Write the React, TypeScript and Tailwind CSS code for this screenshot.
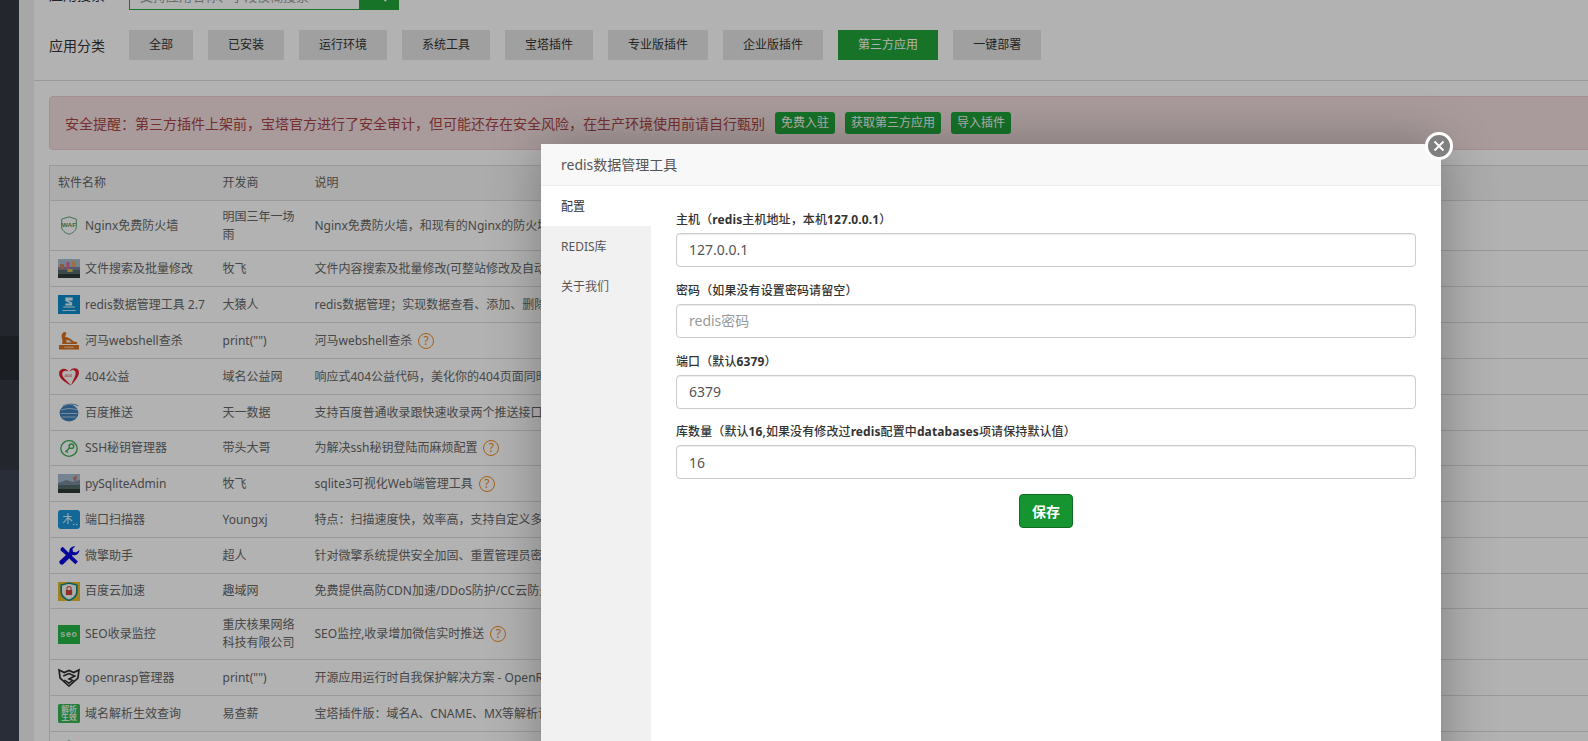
import React from "react";

const Q = () => (
  <span className="inline-flex items-center justify-center w-[16px] h-[16px] rounded-full border border-[#ee8a1e] text-[#ee8a1e] text-[12px] leading-none ml-[6px] align-middle shrink-0">?</span>
);

const Box = ({ children }: { children: React.ReactNode }) => (
  <svg width="22" height="19" viewBox="0 0 21 19" preserveAspectRatio="none" className="shrink-0">{children}</svg>
);

const Scene = ({ v }: { v: number }) => (
  <Box>
    <rect width="21" height="19" fill="#a9bccf" />
    <rect y="10" width="21" height="9" fill="#56696a" />
    <rect y="15" width="21" height="4" fill="#2f3a36" />
    {v === 1 ? (
      <>
        <rect x="0" y="8" width="21" height="3" fill="#7a7fa8" />
        <rect x="2" y="5" width="4" height="5" fill="#c9805e" />
        <rect x="8" y="3" width="3" height="7" fill="#d868a0" />
        <rect x="13" y="2" width="4" height="6" fill="#e0a45c" />
        <rect x="9" y="10" width="5" height="3" fill="#c4bc5a" />
      </>
    ) : (
      <>
        <path d="M0 9 L8 6 L14 8 L21 6 V11 H0Z" fill="#78899c" />
        <path d="M14 4 L18 1 L17 9 Z" fill="#c9766a" />
      </>
    )}
  </Box>
);

const icons: Record<string, React.ReactNode> = {
  waf: (
    <Box>
      <path d="M10.5 0.8 L17.5 3.2 V11 C17.5 14.5 14 17 10.5 18.3 C7 17 3.5 14.5 3.5 11 V3.2Z" fill="none" stroke="#4f9a6c" strokeWidth="0.9" />
      <text x="10.5" y="11.5" textAnchor="middle" fontSize="6.2" fontWeight="700" fill="#4f9a6c" fontFamily="Liberation Sans, sans-serif">WAF</text>
    </Box>
  ),
  scene1: <Scene v={1} />,
  scene2: <Scene v={2} />,
  redis: (
    <Box>
      <rect width="21" height="19" fill="#0d8ccc" />
      <path d="M7 2.5 H14 V5.5 H9.5 L13.5 7.5 V10.5 H7 V8.5 H12 L7 6Z" fill="#e6f3fa" />
      <rect x="5" y="11.5" width="11" height="1" fill="#e6f3fa" />
      <rect x="4" y="15" width="13" height="1" fill="#bfe0f0" />
    </Box>
  ),
  hema: (
    <Box>
      <path d="M4 12 C5 9 3 7 3.5 4 C4 1.5 6.5 0.5 7.5 1.5 C9 3 6.5 4 7 6 C9.5 6 13 8.5 15 10.5 L18 11 L18 13 H4Z" fill="#d8701f" />
      <path d="M8 9 C10 8.5 12 10 13 11.5 H8Z" fill="#f2f2f2" />
      <rect x="1" y="14" width="19" height="4.5" fill="#d8701f" />
      <rect x="6" y="15.7" width="9" height="1" fill="#f3d3b6" />
    </Box>
  ),
  heart: (
    <Box>
      <path d="M12.5 18.5 C7 15.5 0.8 11.5 1 6.2 C1.2 1.5 7.5 0 10.2 4.5 C8 3.2 4 3.7 4 7 C4 10.5 9 14 12.5 18.5Z" fill="#e01f2e" />
      <path d="M12.5 18.5 C14 13 17.3 9 16.8 5.5 C16.3 2.5 13.5 2 11 4.5 C13 0 20 0.2 20 5.5 C20 10 15 15 12.5 18.5Z" fill="#e01f2e" />
      <text x="9.8" y="10.5" textAnchor="middle" fontSize="4.3" fill="#e01f2e" fontFamily="Liberation Sans, sans-serif">404</text>
    </Box>
  ),
  globe: (
    <Box>
      <ellipse cx="10.5" cy="10" rx="9" ry="8.5" fill="#3f7fb8" />
      <path d="M3 7 C8 5 14 5 19 7 M2.5 10.5 H18.5 M4 14 H17" stroke="#a9cbe6" strokeWidth="1" fill="none" />
      <path d="M5 3 C10 0.5 16 0.5 19.5 3" stroke="#7fa8c8" strokeWidth="1.4" fill="none" />
    </Box>
  ),
  ssh: (
    <Box>
      <circle cx="10.5" cy="9.5" r="7.8" fill="none" stroke="#3dae55" strokeWidth="1.3" />
      <circle cx="12.8" cy="7.2" r="2.2" fill="none" stroke="#3dae55" strokeWidth="1.3" />
      <path d="M11.2 8.8 L7 13 M8 12 L9.5 13.5" stroke="#3dae55" strokeWidth="1.4" fill="none" />
    </Box>
  ),
  port: (
    <Box>
      <rect width="21" height="19" rx="3" fill="#1c95d8" />
      <path d="M5 6.5 H13 M9.5 3 V14 M9.5 7.5 L5 13 M9.5 7.5 L13.5 11" stroke="#dff0fa" strokeWidth="1.1" fill="none" />
      <circle cx="15" cy="14.5" r="0.8" fill="#dff0fa" />
      <circle cx="18" cy="14.5" r="0.8" fill="#dff0fa" />
    </Box>
  ),
  wrench: (
    <Box>
      <path d="M2.5 2.5 L4.5 0.8 L9 5.5 L12 8.5 L19 15.5 L16.5 18.2 L9.5 11.2 L6.5 8 L2.5 4.5 Z" fill="#0808e0" />
      <path d="M20.5 4 A5 5 0 0 1 14 9 L5.5 17.8 A2.3 2.3 0 0 1 2 14.5 L10.8 6 A5 5 0 0 1 16.5 0.2 L13.8 3 L14.3 5.8 L17.2 6.5Z" fill="#0808e0" />
    </Box>
  ),
  cdn: (
    <Box>
      <rect width="21" height="19" fill="#e8bb2a" />
      <path d="M10.5 1 L18 3 V10 C18 14 14 17 10.5 18.5 C7 17 3 14 3 10 V3Z" fill="#f2fbf8" stroke="#17857e" strokeWidth="1.6" />
      <rect x="7.5" y="8" width="6" height="5" fill="#d2423a" />
      <path d="M8.5 8 V6.5 A2 2 0 0 1 12.5 6.5 V8" fill="none" stroke="#d2423a" strokeWidth="1" />
    </Box>
  ),
  seo: (
    <Box>
      <rect width="21" height="19" fill="#24b545" />
      <text x="10.5" y="12.5" textAnchor="middle" fontSize="8.5" fontWeight="700" letterSpacing="0.7" fill="#d8f3de" fontFamily="Liberation Sans, sans-serif">seo</text>
    </Box>
  ),
  rasp: (
    <Box>
      <path d="M1 2 L6 4.5 L10.5 2.5 L15 4.5 L20 2 L19 10 L10.5 18 L2 10Z" fill="none" stroke="#2a2a2a" strokeWidth="1.6" />
      <path d="M5 8 L10.5 5.5 L16 8 L10.5 11 L14 12.5 L10.5 15 L6 12" fill="none" stroke="#2a2a2a" strokeWidth="1.5" />
    </Box>
  ),
  dns: (
    <Box>
      <rect width="21" height="19" rx="1.5" fill="#36b552" />
      <text x="10.5" y="8" textAnchor="middle" fontSize="7.5" fontWeight="700" fill="#e6f6ea" fontFamily="Noto Sans CJK SC, sans-serif">解析</text>
      <text x="10.5" y="16.5" textAnchor="middle" fontSize="7.5" fontWeight="700" fill="#e6f6ea" fontFamily="Noto Sans CJK SC, sans-serif">生效</text>
    </Box>
  ),
};

type Row = { h: string; icon: string; name: string; dev: string; desc: string; q?: boolean };

const rows: Row[] = [
  { h: "h-[50px]", icon: "waf", name: "Nginx免费防火墙", dev: "明国三年一场雨", desc: "Nginx免费防火墙，和现有的Nginx的防火墙兼容使用，提供多种防护规则" },
  { h: "h-[36px]", icon: "scene1", name: "文件搜索及批量修改", dev: "牧飞", desc: "文件内容搜索及批量修改(可整站修改及自动备份文件内容)" },
  { h: "h-[36px]", icon: "redis", name: "redis数据管理工具 2.7", dev: "大猿人", desc: "redis数据管理；实现数据查看、添加、删除、修改等功能" },
  { h: "h-[36px]", icon: "hema", name: "河马webshell查杀", dev: 'print("")', desc: "河马webshell查杀", q: true },
  { h: "h-[36px]", icon: "heart", name: "404公益", dev: "域名公益网", desc: "响应式404公益代码，美化你的404页面同时传递公益信息" },
  { h: "h-[36px]", icon: "globe", name: "百度推送", dev: "天一数据", desc: "支持百度普通收录跟快速收录两个推送接口，自动提交网站链接" },
  { h: "h-[35px]", icon: "ssh", name: "SSH秘钥管理器", dev: "带头大哥", desc: "为解决ssh秘钥登陆而麻烦配置", q: true },
  { h: "h-[36px]", icon: "scene2", name: "pySqliteAdmin", dev: "牧飞", desc: "sqlite3可视化Web端管理工具", q: true },
  { h: "h-[36px]", icon: "port", name: "端口扫描器", dev: "Youngxj", desc: "特点：扫描速度快，效率高，支持自定义多个端口扫描" },
  { h: "h-[36px]", icon: "wrench", name: "微擎助手", dev: "超人", desc: "针对微擎系统提供安全加固、重置管理员密码等功能" },
  { h: "h-[35px]", icon: "cdn", name: "百度云加速", dev: "趣域网", desc: "免费提供高防CDN加速/DDoS防护/CC云防火墙服务" },
  { h: "h-[51px]", icon: "seo", name: "SEO收录监控", dev: "重庆核果网络科技有限公司", desc: "SEO监控,收录增加微信实时推送", q: true },
  { h: "h-[36px]", icon: "rasp", name: "openrasp管理器", dev: 'print("")', desc: "开源应用运行时自我保护解决方案 - OpenRASP 管理工具" },
  { h: "h-[36px]", icon: "dns", name: "域名解析生效查询", dev: "易查薪", desc: "宝塔插件版：域名A、CNAME、MX等解析记录生效查询工具" },
  { h: "h-[36px]", icon: "waf", name: "", dev: "", desc: "" },
];

const cats = ["全部", "已安装", "运行环境", "系统工具", "宝塔插件", "专业版插件", "企业版插件", "第三方应用", "一键部署"];

const fields = [
  { label: <>主机（<b>redis</b>主机地址，本机<b>127.0.0.1</b>）</>, value: "127.0.0.1", ph: "", mb: "mb-[15px]", pb: "pb-[2px]" },
  { label: <>密码（如果没有设置密码请留空）</>, value: "", ph: "redis密码", mb: "mb-[15px]", pb: "pb-[2px]" },
  { label: <>端口（默认<b>6379</b>）</>, value: "6379", ph: "", mb: "mb-[14px]", pb: "pb-[2px]" },
  { label: <>库数量（默认<b>16</b>,如果没有修改过<b>redis</b>配置中<b>databases</b>项请保持默认值）</>, value: "16", ph: "", mb: "mb-[15px]", pb: "pb-0" },
];

export default function App() {
  return (
    <div className="relative h-[741px] w-[1588px] overflow-hidden bg-white font-['Noto_Sans','Noto_Sans_CJK_SC',sans-serif] text-[12px] text-[#555]">
      <div className="flex h-full">
        <aside className="w-[19px] shrink-0 flex flex-col bg-[#333841]">
          <div className="h-[336px] shrink-0" />
          <div className="h-[44px] shrink-0 bg-[#282d34]" />
          <div className="h-[90px] shrink-0" />
          <div className="flex-1 bg-[#3c414f]" />
        </aside>
        <div className="w-[15px] shrink-0 bg-[#f0f0f0]" />
        <main className="flex-1 min-w-0">
          <div className="mt-[-21px] px-[15px] border-b border-[#ddd] h-[102px]">
            <div className="flex items-center h-[31px]">
              <span className="w-[80px] pb-[1px] text-[14px] text-[#333]">应用搜索</span>
              <div className="flex w-[270px] h-[31px]">
                <div className="flex-1 border border-[#20a53a] pl-[10px] pt-[7px] text-[13px] text-[#999]">支持应用名称、字段模糊搜索</div>
                <div className="w-[39px] bg-[#20a53a] flex items-center justify-center">
                  <svg width="14" height="14" viewBox="0 0 14 14"><circle cx="6" cy="6" r="4" fill="none" stroke="#fff" strokeWidth="2" /><path d="M9 9 L13 13" stroke="#fff" strokeWidth="2" /></svg>
                </div>
              </div>
            </div>
            <div className="flex items-center mt-[20px] h-[30px]">
              <span className="w-[80px] text-[14px] text-[#333]">应用分类</span>
              <div className="flex gap-[15px]">
                {cats.map((c) =>
                  c === "第三方应用" ? (
                    <div key={c} className="px-[20px] h-[30px] flex items-center bg-[#20a53a] text-white">{c}</div>
                  ) : (
                    <div key={c} className="px-[20px] h-[30px] flex items-center bg-[#e5e5e5] text-[#333]">{c}</div>
                  )
                )}
              </div>
            </div>
          </div>
          <div className="pl-[15px]">
            <div className="mt-[15px] w-[1600px] h-[54px] flex items-center pl-[15px] border border-[#ebccd1] bg-[#f2dede] rounded-[4px] text-[#a94442] text-[14px]">
              <span>安全提醒：第三方插件上架前，宝塔官方进行了安全审计，但可能还存在安全风险，在生产环境使用前请自行甄别</span>
              <div className="flex gap-[10px] ml-[10px] text-[12px] text-white">
                <span className="h-[22px] px-[6px] flex items-center rounded-[3px] bg-[#20a53a]">免费入驻</span>
                <span className="h-[22px] px-[6px] flex items-center rounded-[3px] bg-[#20a53a]">获取第三方应用</span>
                <span className="h-[22px] px-[6px] flex items-center rounded-[3px] bg-[#20a53a]">导入插件</span>
              </div>
            </div>
            <table className="mt-[15px] w-[1600px] table-fixed border-collapse border-l border-t border-[#ddd] text-[#666]">
              <colgroup>
                <col className="w-[165px]" />
                <col className="w-[92px]" />
                <col />
              </colgroup>
              <thead>
                <tr className="h-[35px] bg-[#f6f6f6] border-b border-[#ddd] text-left">
                  <th className="px-[8px] font-normal">软件名称</th>
                  <th className="px-[8px] font-normal">开发商</th>
                  <th className="px-[8px] font-normal">说明</th>
                </tr>
              </thead>
              <tbody>
                {rows.map((r, i) => (
                  <tr key={i} className={`${r.h} border-b border-[#ddd]`}>
                    <td className="px-[8px]">
                      <div className="flex items-center gap-[5px] whitespace-nowrap">
                        {icons[r.icon]}
                        <span>{r.name}</span>
                      </div>
                    </td>
                    <td className="px-[8px] leading-[18px]">{r.dev}</td>
                    <td className="px-[8px] whitespace-nowrap overflow-hidden">
                      <div className="flex items-center">{r.desc}{r.q ? <Q /> : null}</div>
                    </td>
                  </tr>
                ))}
              </tbody>
            </table>
          </div>
        </main>
      </div>

      <div className="absolute inset-0 bg-black/30" />

      <div className="absolute left-[541px] top-[144px] w-[900px] h-[700px] bg-white shadow-[1px_1px_50px_rgba(0,0,0,0.3)]">
        <div className="h-[42px] flex items-center pl-[20px] bg-[#f8f8f8] border-b border-[#eee] text-[14px] text-[#555]">redis数据管理工具</div>
        <div className="flex h-[658px]">
          <div className="w-[110px] shrink-0 bg-[#f0f0f0]/95 text-[#555]">
            <div className="h-[40px] flex items-center pl-[20px] pt-[1px] bg-white text-[#333]">配置</div>
            <div className="h-[40px] flex items-center pl-[20px] pt-[1px]">REDIS库</div>
            <div className="h-[40px] flex items-center pl-[20px] pt-[1px]">关于我们</div>
          </div>
          <div className="flex-1 px-[25px] pt-[25px]">
            {fields.map((f, i) => (
              <div key={i} className={f.mb}>
                <div className="h-[17px] leading-[17px] mb-[5px] text-[12px] font-medium tracking-[0.1px] text-[#333]">{f.label}</div>
                <div className={`h-[34px] flex items-center px-[12px] ${f.pb} border border-[#ccc] rounded-[4px] shadow-[inset_0_1px_1px_rgba(0,0,0,0.075)] text-[14px] ${f.value ? "text-[#555]" : "text-[#999]"}`}>
                  {f.value || f.ph}
                </div>
              </div>
            ))}
            <div className="flex justify-center">
              <button className="px-[12px] h-[34px] rounded-[4px] bg-[#16942f] border border-[#0f6d22] text-white text-[14px] font-bold">保存</button>
            </div>
          </div>
        </div>
        <div className="absolute -right-[12px] -top-[12px] w-[28px] h-[28px] rounded-full border-[3px] border-white bg-[#808080] flex items-center justify-center">
          <svg width="12" height="12" viewBox="0 0 12 12"><path d="M1.5 1.5 L10.5 10.5 M10.5 1.5 L1.5 10.5" stroke="#fff" strokeWidth="1.8" /></svg>
        </div>
      </div>
    </div>
  );
}
